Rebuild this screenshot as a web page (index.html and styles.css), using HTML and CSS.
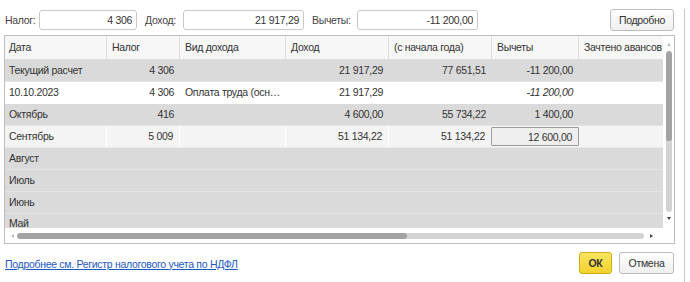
FILE: index.html
```html
<!DOCTYPE html>
<html lang="ru">
<head>
    <meta charset="UTF-8">
    <title>НДФЛ</title>
    <link rel="stylesheet" href="styles.css">
</head>
<body>
    <div class="window">
        <div class="topbar">
            <span class="field-label lbl-tax">Налог:</span>
            <input class="field field-tax" type="text" value="4 306" readonly>
            <span class="field-label lbl-income">Доход:</span>
            <input class="field field-income" type="text" value="21 917,29" readonly>
            <span class="field-label lbl-deduct">Вычеты:</span>
            <input class="field field-deduct" type="text" value="-11 200,00" readonly>
            <button type="button" class="btn btn-more">Подробно</button>
        </div>

        <div class="grid">
            <div class="grid-body">
                <div class="viewport">
                    <div class="row row-head">
                        <div class="cell">Дата</div>
                        <div class="cell">Налог</div>
                        <div class="cell">Вид дохода</div>
                        <div class="cell">Доход</div>
                        <div class="cell">(с начала года)</div>
                        <div class="cell">Вычеты</div>
                        <div class="cell">Зачтено авансов</div>
                    </div>
                    <div class="row row-grey">
                        <div class="cell">Текущий расчет</div>
                        <div class="cell num">4 306</div>
                        <div class="cell"></div>
                        <div class="cell num">21 917,29</div>
                        <div class="cell num">77 651,51</div>
                        <div class="cell num">-11 200,00</div>
                        <div class="cell"></div>
                    </div>
                    <div class="row row-white">
                        <div class="cell">10.10.2023</div>
                        <div class="cell num">4 306</div>
                        <div class="cell">Оплата труда (осн…</div>
                        <div class="cell num">21 917,29</div>
                        <div class="cell num"></div>
                        <div class="cell num italic">-11 200,00</div>
                        <div class="cell"></div>
                    </div>
                    <div class="row row-grey">
                        <div class="cell">Октябрь</div>
                        <div class="cell num">416</div>
                        <div class="cell"></div>
                        <div class="cell num">4 600,00</div>
                        <div class="cell num">55 734,22</div>
                        <div class="cell num">1 400,00</div>
                        <div class="cell"></div>
                    </div>
                    <div class="row row-light">
                        <div class="cell">Сентябрь</div>
                        <div class="cell num">5 009</div>
                        <div class="cell"></div>
                        <div class="cell num">51 134,22</div>
                        <div class="cell num">51 134,22</div>
                        <div class="cell num current">12 600,00</div>
                        <div class="cell"></div>
                    </div>
                    <div class="row row-grey"><div class="cell">Август</div></div>
                    <div class="row row-grey"><div class="cell">Июль</div></div>
                    <div class="row row-grey"><div class="cell">Июнь</div></div>
                    <div class="row row-grey row-last"><div class="cell">Май</div></div>
                </div>
                <div class="vscroll">
                    <div class="arrow arrow-up"></div>
                    <div class="vtrack"><div class="vthumb"></div></div>
                    <div class="arrow arrow-down"></div>
                </div>
            </div>
            <div class="hscroll">
                <div class="arrow arrow-left"></div>
                <div class="htrack"><div class="hthumb"></div></div>
                <div class="arrow arrow-right"></div>
                <div class="corner"></div>
            </div>
        </div>

        <div class="footer">
            <a href="#" class="report-link">Подробнее см. Регистр налогового учета по НДФЛ</a>
            <button type="button" class="btn btn-ok">ОК</button>
            <button type="button" class="btn btn-cancel">Отмена</button>
        </div>
    </div>
</body>
</html>
```

FILE: styles.css
```css
body {
    margin: 0;
    background: #fff;
    font-family: "Liberation Sans", Arial, sans-serif;
    font-size: 10.5px;
    letter-spacing: -0.3px;
    color: #333;
}

.window {
    box-sizing: border-box;
    width: 685px;
    height: 281px;
    border-right: 1px solid #c6c6c6;
    border-bottom: 1px solid #c6c6c6;
}

/* top line with totals */
.topbar {
    display: flex;
    align-items: center;
    height: 22px;
    margin-top: 9px;
    padding-left: 5px;
    padding-right: 10px;
}

.field-label {
    color: #444;
}
.lbl-tax { width: 34px; }
.lbl-income { width: 38px; margin-left: 8px; }
.lbl-deduct { width: 45px; margin-left: 8px; }

.field {
    box-sizing: border-box;
    height: 20px;
    border: 1px solid #c9c9c9;
    border-radius: 3px;
    padding: 0 4px;
    text-align: right;
    font-family: inherit;
    font-size: 10.5px;
    letter-spacing: -0.3px;
    color: #333;
    background: #fff;
    outline: none;
}
.field-tax { width: 98px; }
.field-income { width: 121px; }
.field-deduct { width: 121px; }

.btn {
    box-sizing: border-box;
    height: 22px;
    border: 1px solid #bcbcbc;
    border-radius: 3px;
    background: linear-gradient(#ffffff, #efefef);
    font-family: inherit;
    font-size: 10.5px;
    letter-spacing: -0.3px;
    color: #333;
    padding: 0;
}
.btn-more {
    margin-left: auto;
    width: 64px;
}

/* table */
.grid {
    box-sizing: border-box;
    width: 671px;
    height: 209px;
    margin: 4px 0 0 4px;
    border: 1px solid #bdbdbd;
    display: flex;
    flex-direction: column;
}

.grid-body {
    display: flex;
    height: 192px;
}

.viewport {
    width: 658px;
    overflow: hidden;
}

.row {
    display: grid;
    grid-template-columns: 102px 73px 106px 103px 103px 87px 110px;
    width: 684px;
    box-sizing: border-box;
    height: 22px;
    border-bottom: 1px solid #e6e6e6;
}

.cell {
    box-sizing: border-box;
    padding: 0 6px 0 5px;
    line-height: 21px;
    white-space: nowrap;
    overflow: hidden;
}
.row .cell:first-child {
    padding-left: 4px;
}

.num { text-align: right; }
.italic { font-style: italic; }

.row-head {
    height: 24px;
    background: #f7f7f7;
    border-bottom: 1px solid #dedede;
}
.row-head .cell {
    line-height: 23px;
    border-right: 1px solid #dcdcdc;
}

.row-grey { background: #dadada; border-bottom-color: #e4e4e4; }
.row-white { background: #fff; border-bottom-color: #fff; }
.row-light { background: #f4f4f4; border-bottom-color: #e8e8e8; }
.row-light .cell { border-right: 1px solid #fff; }
.row-last .cell { line-height: 19px; }

.row-light .current {
    border: 1px solid #9c9c9c;
    background: #efefef;
    line-height: 18px;
    margin: 1px 0 1px -1px;
    height: 19px;
    border-radius: 1px;
}

/* scrollbars */
.vscroll {
    width: 11px;
    display: flex;
    flex-direction: column;
    align-items: center;
}
.vtrack {
    flex: 1;
    width: 6px;
    margin-left: 1px;
    border-radius: 3px;
    background: #d3d3d3;
    overflow: hidden;
}
.vthumb {
    height: 90px;
    border-radius: 3px;
    background: #a3a3a3;
}

.hscroll {
    display: flex;
    align-items: center;
    height: 15px;
    padding-left: 5px;
}
.htrack {
    width: 627px;
    height: 6px;
    margin-left: 3px;
    border-radius: 3px;
    background: #d3d3d3;
    overflow: hidden;
}
.hthumb {
    width: 390px;
    height: 6px;
    border-radius: 3px;
    background: #a3a3a3;
}
.corner { width: 11px; }

.arrow {
    width: 0;
    height: 0;
    border-style: solid;
    border-color: transparent;
}
.arrow-up {
    margin: 7px 0 5px 1px;
    border-width: 0 2.5px 3px 2.5px;
    border-bottom-color: #bdbdbd;
}
.arrow-down {
    margin: 5px 0 8px 1px;
    border-width: 3px 2.5px 0 2.5px;
    border-top-color: #444;
}
.arrow-left {
    border-width: 2.5px 3px 2.5px 0;
    border-right-color: #bdbdbd;
    margin-left: 1px;
}
.arrow-right {
    border-width: 2.5px 0 2.5px 3px;
    border-left-color: #444;
    margin-left: 6px;
    margin-right: 5px;
}

/* bottom line */
.footer {
    display: flex;
    align-items: center;
    height: 22px;
    margin-top: 8px;
    padding-left: 5px;
    padding-right: 10px;
}
.report-link {
    color: #1d58c2;
    text-decoration: underline;
    margin-top: 1px;
}
.btn-ok {
    margin-left: auto;
    width: 33px;
    border-color: #cfae12;
    background: linear-gradient(#fbe561, #f3d22c);
    font-weight: bold;
    color: #333;
}
.btn-cancel {
    margin-left: 7px;
    width: 55px;
}
```
